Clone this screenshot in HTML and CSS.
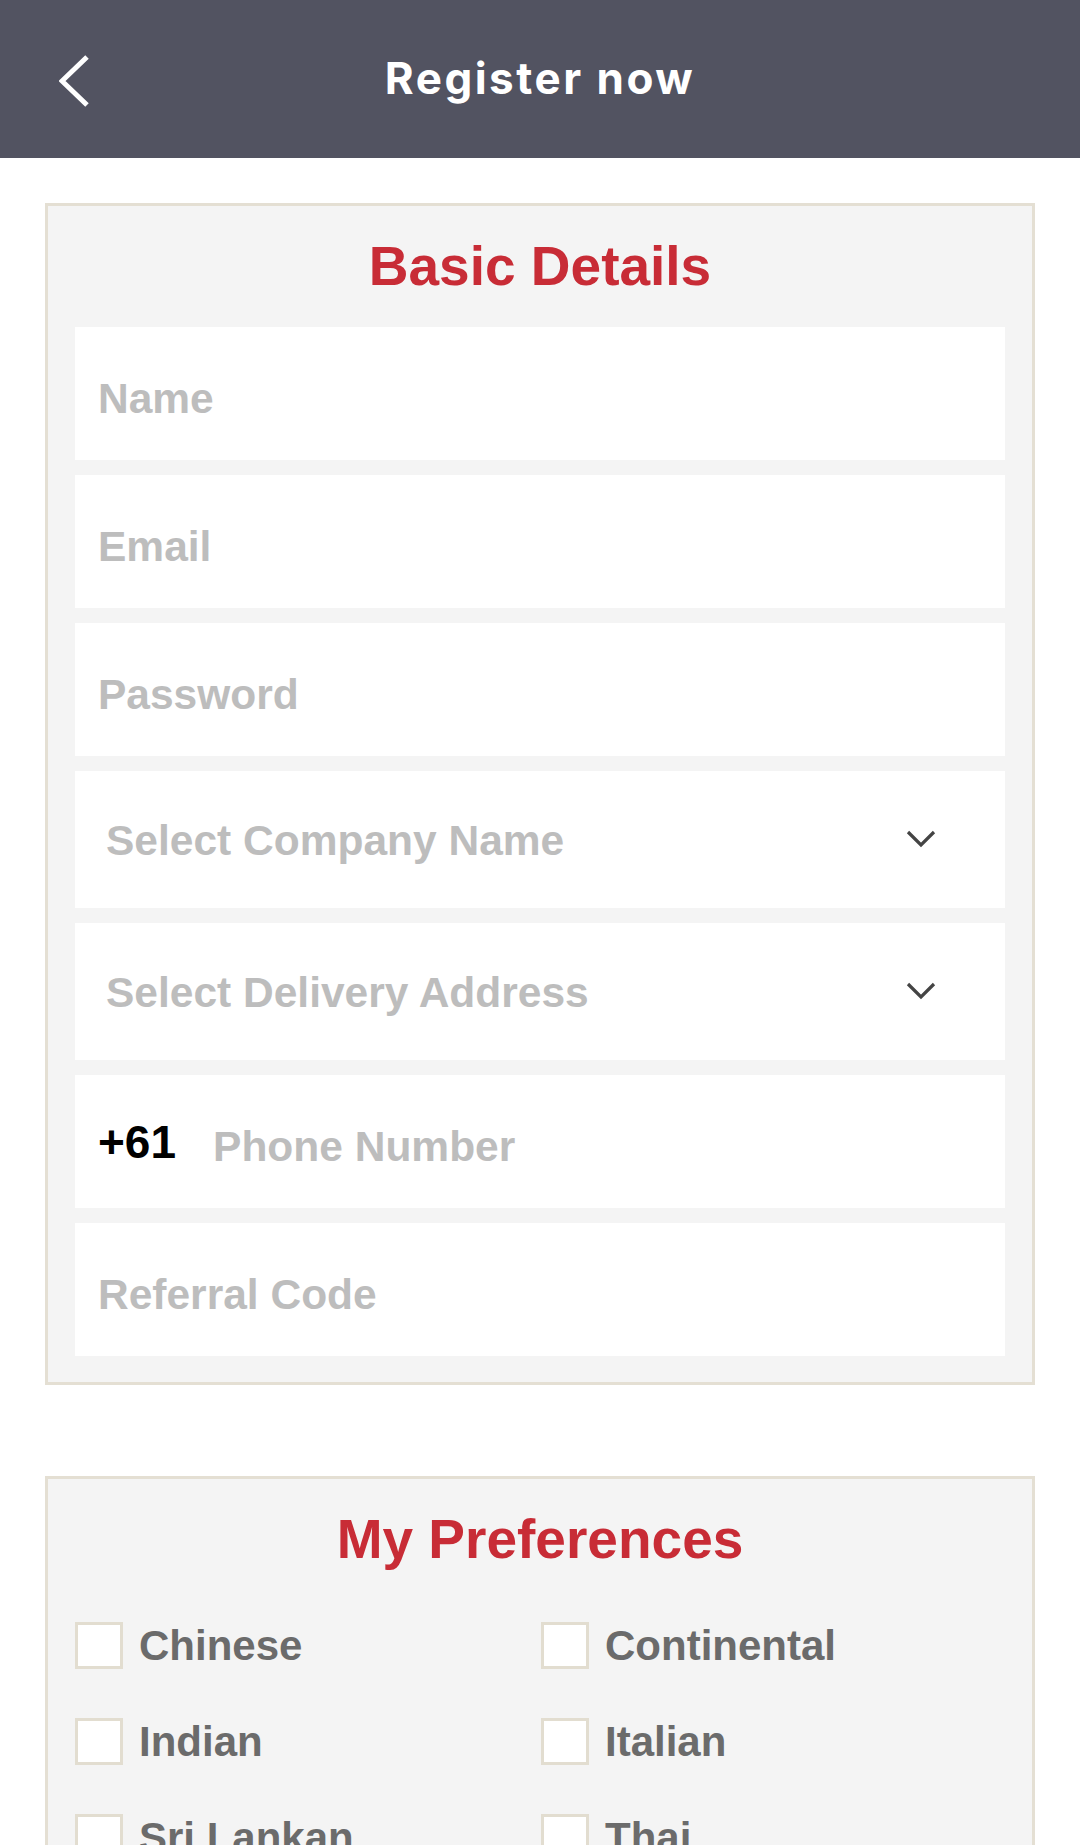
FILE: index.html
```html
<!DOCTYPE html>
<html lang="en">
<head>
    <meta charset="UTF-8">
    <meta name="viewport" content="width=device-width, initial-scale=1.0">
    <title>Register now</title>
    <link rel="stylesheet" href="styles.css">
</head>
<body>
    <div class="topbar">
        <div class="back">
            <svg width="30" height="52" viewBox="0 0 30 52">
                <polyline points="28,2 3,26 28,50" fill="none" stroke="#fff" stroke-width="5"/>
            </svg>
        </div>
        <h1 class="topbar-title">Register now</h1>
        <div></div>
    </div>

    <div class="panel">
        <h2 class="panel-title">Basic Details</h2>
        <div class="fields">
            <div class="field"><span class="placeholder">Name</span></div>
            <div class="field"><span class="placeholder">Email</span></div>
            <div class="field"><span class="placeholder">Password</span></div>
            <div class="field select">
                <span class="placeholder">Select Company Name</span>
                <svg width="30" height="18" viewBox="0 0 30 18">
                    <polyline points="2,2 15,15 28,2" fill="none" stroke="#444" stroke-width="3.2"/>
                </svg>
            </div>
            <div class="field select">
                <span class="placeholder">Select Delivery Address</span>
                <svg width="30" height="18" viewBox="0 0 30 18">
                    <polyline points="2,2 15,15 28,2" fill="none" stroke="#444" stroke-width="3.2"/>
                </svg>
            </div>
            <div class="field phone">
                <span class="prefix">+61</span>
                <span class="placeholder">Phone Number</span>
            </div>
            <div class="field"><span class="placeholder">Referral Code</span></div>
        </div>
    </div>

    <div class="panel prefs">
        <h2 class="panel-title">My Preferences</h2>
        <div class="pref-grid">
            <label class="pref"><span class="box"></span>Chinese</label>
            <label class="pref"><span class="box"></span>Continental</label>
            <label class="pref"><span class="box"></span>Indian</label>
            <label class="pref"><span class="box"></span>Italian</label>
            <label class="pref"><span class="box"></span>Sri Lankan</label>
            <label class="pref"><span class="box"></span>Thai</label>
        </div>
    </div>
</body>
</html>
```

FILE: styles.css
```css
body {
    margin: 0;
    background: #fff;
    font-family: "Liberation Sans", Arial, sans-serif;
}
.topbar {
    height: 158px;
    background: #525361;
    display: grid;
    grid-template-columns: 1fr auto 1fr;
    align-items: center;
}
.back {
    padding-left: 59px;
    padding-top: 4px;
    display: flex;
}
.topbar-title {
    margin: 0;
    color: #fff;
    font-family: Inter, "Liberation Sans", sans-serif;
    font-weight: 700;
    font-size: 44px;
    letter-spacing: 2.5px;
    line-height: 52px;
    padding-bottom: 2px;
}
.panel {
    margin: 45px 45px 0;
    background: #f4f4f4;
    border: 3px solid #e4dfd3;
    padding: 30px 27px 26px;
}
.panel.prefs {
    margin-top: 91px;
    padding-bottom: 60px;
}
.panel-title {
    margin: 0 0 31px;
    text-align: center;
    color: #c82c36;
    font-size: 55px;
    line-height: 60px;
    font-weight: 700;
}
.fields {
    display: flex;
    flex-direction: column;
    gap: 15px;
}
.field {
    background: #fff;
    height: 133px;
    box-sizing: border-box;
    padding: 10px 23px 0;
    display: flex;
    align-items: center;
    font-size: 42.5px;
    line-height: 42px;
    font-weight: 700;
}
.placeholder {
    color: #bdbdbd;
}
.field.select {
    height: 137px;
    padding: 3px 69px 0 31px;
    justify-content: space-between;
}
.field.select svg {
    margin-top: -4px;
}
.field.phone .prefix {
    color: #000;
    font-size: 46px;
    margin-right: 37px;
    margin-top: -10px;
}
.pref-grid {
    display: grid;
    grid-template-columns: 466px 1fr;
    row-gap: 49px;
    padding-top: 22px;
}
.pref {
    display: flex;
    align-items: center;
    gap: 16px;
    font-size: 42px;
    line-height: 41px;
    font-weight: 700;
    color: #6b6b6b;
}
.box {
    width: 48px;
    height: 47px;
    box-sizing: border-box;
    border: 3px solid #e2ddd0;
    background: #fff;
    flex-shrink: 0;
}
```
